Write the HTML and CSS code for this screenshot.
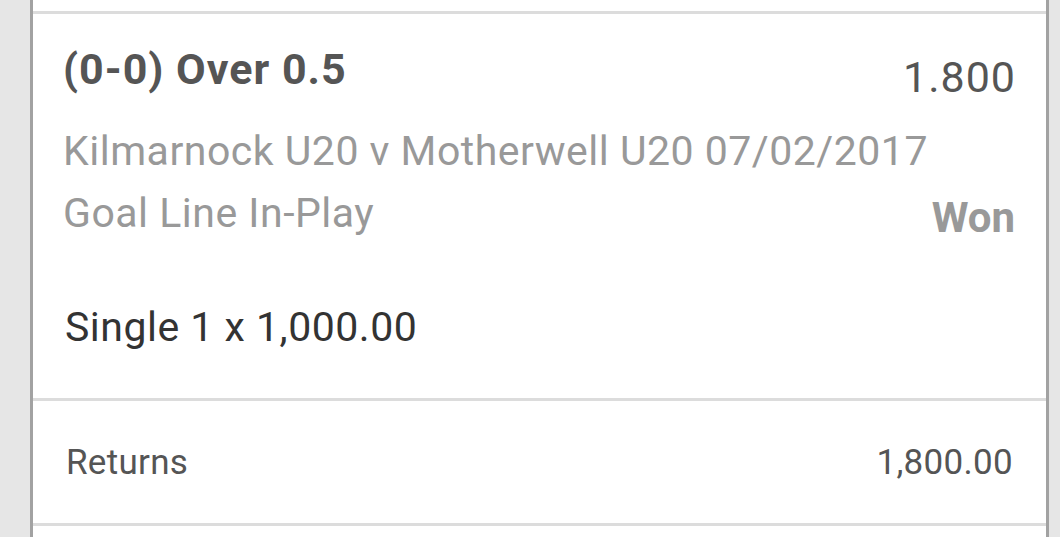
FILE: index.html
```html
<!DOCTYPE html>
<html lang="en">
<head>
    <meta charset="UTF-8">
    <meta name="viewport" content="width=device-width, initial-scale=1.0">
    <title>Bet History</title>
    <link rel="stylesheet" href="styles.css">
</head>
<body>
    <div class="list">
        <!-- settled bet -->
        <div class="bet">
            <div class="bet-main">
                <div class="row">
                    <span class="selection">(0-0) Over 0.5</span>
                    <span class="odds">1.800</span>
                </div>
                <div class="event">Kilmarnock U20 v Motherwell U20 07/02/2017</div>
                <div class="row">
                    <span class="market">Goal Line In-Play</span>
                    <span class="status">Won</span>
                </div>
                <div class="stake">Single 1 x 1,000.00</div>
            </div>
            <div class="returns">
                <span>Returns</span>
                <span>1,800.00</span>
            </div>
        </div>
    </div>
</body>
</html>
```

FILE: styles.css
```css
* {
    box-sizing: border-box;
}
body {
    font-family: Roboto, "Noto Sans", sans-serif;
    background: #e6e6e6;
    margin: 0;
    padding: 0;
    height: 537px;
    overflow: hidden;
}
.list {
    margin-left: 30px;
    width: 1019px;
    height: 100%;
    padding-top: 11px;
    background: #fff;
    border-left: 3px solid #a2a2a2;
    border-right: 3px solid #a2a2a2;
}
.bet {
    border-top: 3px solid #dcdcdc;
}
.bet-main {
    padding: 30px 31px 0 30px;
    height: 384px;
}
.row {
    display: flex;
    justify-content: space-between;
    align-items: flex-start;
}
.selection {
    font-size: 43px;
    font-weight: bold;
    letter-spacing: 1px;
    color: #555;
    line-height: 50px;
}
.odds {
    font-size: 43px;
    letter-spacing: 1px;
    color: #555;
    line-height: 50px;
    margin-top: 8px;
    margin-right: -1px;
}
.event {
    font-size: 41px;
    letter-spacing: 0.5px;
    color: #999;
    line-height: 48px;
    margin-top: 25px;
}
.market {
    font-size: 41px;
    letter-spacing: 0.5px;
    color: #999;
    line-height: 48px;
    margin-top: 14px;
}
.status {
    font-size: 42px;
    font-weight: bold;
    color: #999;
    line-height: 48px;
    margin-top: 19px;
}
.stake {
    font-size: 41px;
    letter-spacing: 0.5px;
    color: #333;
    line-height: 48px;
    margin-top: 61px;
    padding-left: 2px;
}
.returns {
    display: flex;
    justify-content: space-between;
    align-items: center;
    height: 128px;
    padding: 0 33px 0 33px;
    font-size: 35px;
    letter-spacing: 0.3px;
    color: #555;
    border-top: 3px solid #dcdcdc;
    border-bottom: 3px solid #dcdcdc;
}
```
